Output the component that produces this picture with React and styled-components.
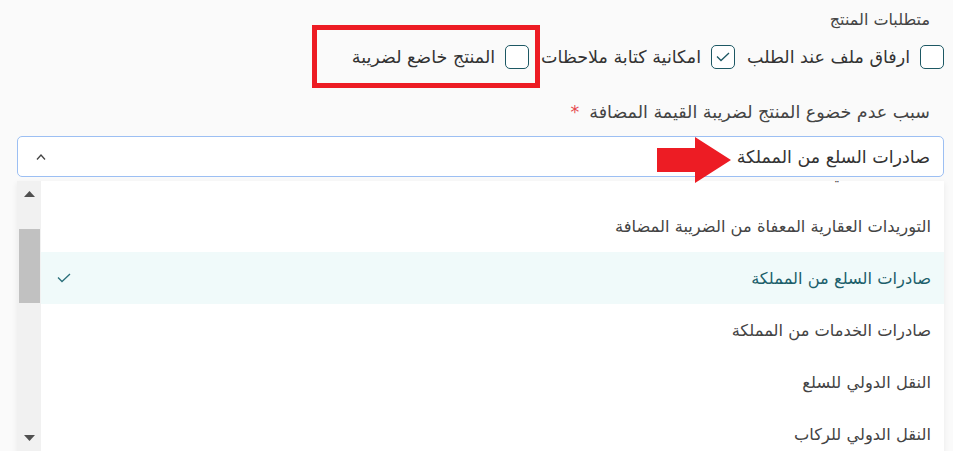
import React from "react";
import styled, { createGlobalStyle } from "styled-components";

const Global = createGlobalStyle`
  html, body { margin: 0; padding: 0; overflow: hidden; background: #fafafa; }
  body { font-family: "DejaVu Sans", "Noto Sans", sans-serif; }
  * { box-sizing: border-box; }
`;

const Page = styled.div`
  direction: rtl;
  padding: 8px 9px 0 17px;
  color: #333;
  height: 451px;
  overflow: hidden;
`;

const SectionTitle = styled.div`
  padding-right: 14px;
  font-size: 16px;
  line-height: 24px;
  color: #444;
`;

const CheckRow = styled.div`
  display: flex;
  align-items: center;
  gap: 12px;
  margin-top: 13px;
  height: 24px;
`;

const CheckItem = styled.label`
  position: relative;
  display: flex;
  align-items: center;
  gap: 10px;
  font-size: 17.5px;
  color: #333;
`;

const Box = styled.span`
  width: 24px;
  height: 24px;
  border: 1.5px solid #1d5864;
  border-radius: 5px;
  display: flex;
  align-items: center;
  justify-content: center;
  background: #fff;
  flex: none;
`;

const Annotation = styled.span`
  position: absolute;
  left: -40px;
  right: -11px;
  top: -20px;
  bottom: -19px;
  border: 5px solid #ed1c24;
  pointer-events: none;
`;

const FieldLabel = styled.div`
  margin-top: 31px;
  padding-right: 14px;
  font-size: 17.5px;
  line-height: 24px;
  color: #444;
  display: flex;
  gap: 10px;
`;

const Required = styled.span`
  color: #e5484d;
`;

const SelectWrap = styled.div`
  position: relative;
  margin-top: 12px;
`;

const SelectBox = styled.div`
  height: 41px;
  border: 1px solid #9cbff3;
  border-radius: 5px;
  background: #fff;
  display: flex;
  align-items: center;
  justify-content: space-between;
  padding: 0 13px 0 18px;
  font-size: 17.5px;
  color: #333;
`;

const ArrowMark = styled.svg`
  position: absolute;
  left: 640px;
  top: 1px;
`;

const Dropdown = styled.div`
  margin-top: 4px;
  height: 280px;
  background: #fff;
  display: flex;
  box-shadow: 0 2px 6px rgba(0, 0, 0, 0.07);
`;

const Viewport = styled.div`
  flex: 1;
  overflow: hidden;
`;

const OptionList = styled.div`
  margin-top: -33px;
  display: flex;
  flex-direction: column;
`;

const Option = styled.div`
  height: 52px;
  display: flex;
  align-items: center;
  justify-content: space-between;
  padding: 0 13px 0 16px;
  font-size: 16.3px;
  background: ${(p) => (p.$active ? "#f0fafa" : "#fff")};
  color: ${(p) => (p.$active ? "#1c5f6b" : "#444")};
`;

const Scrollbar = styled.div`
  width: 24px;
  background: #f1f1f1;
  display: flex;
  flex-direction: column;
  align-items: center;
  padding: 10px 0 20px;
`;

const Thumb = styled.div`
  width: 21px;
  height: 74px;
  background: #c1c1c1;
  margin-top: 32px;
`;

const Spacer = styled.div`
  flex: 1;
`;

const Tri = ({ down }) => (
  <svg width="11" height="6" viewBox="0 0 11 6">
    <polygon points={down ? "0,0 11,0 5.5,6" : "0,6 11,6 5.5,0"} fill="#505050" />
  </svg>
);

const Check = ({ w = 14, h = 10, color = "#1d5864" }) => (
  <svg width={w} height={h} viewBox="0 0 14 10">
    <polyline points="1,4.5 5,8.5 13,1" fill="none" stroke={color} strokeWidth="1.3" />
  </svg>
);

const options = [
  "الخدمات المالية المعفاة",
  "التوريدات العقارية المعفاة من الضريبة المضافة",
  "صادرات السلع من المملكة",
  "صادرات الخدمات من المملكة",
  "النقل الدولي للسلع",
  "النقل الدولي للركاب",
];

const selected = "صادرات السلع من المملكة";

export default function App() {
  return (
    <>
      <Global />
      <Page>
        <SectionTitle>متطلبات المنتج</SectionTitle>
        <CheckRow>
          <CheckItem>
            <Box />
            ارفاق ملف عند الطلب
          </CheckItem>
          <CheckItem>
            <Box>
              <Check />
            </Box>
            امكانية كتابة ملاحظات
          </CheckItem>
          <CheckItem>
            <Box />
            المنتج خاضع لضريبة
            <Annotation />
          </CheckItem>
        </CheckRow>
        <FieldLabel>
          سبب عدم خضوع المنتج لضريبة القيمة المضافة
          <Required>*</Required>
        </FieldLabel>
        <SelectWrap>
          <SelectBox>
            <span>{selected}</span>
            <svg width="10" height="6" viewBox="0 0 10 6">
              <polyline points="1,5.5 5,1 9,5.5" fill="none" stroke="#444" strokeWidth="1.3" />
            </svg>
          </SelectBox>
          <ArrowMark width="74" height="46" viewBox="0 0 74 46">
            <polygon points="0,11 38,11 38,0 74,23 38,46 38,35 0,35" fill="#ed1c24" />
          </ArrowMark>
        </SelectWrap>
        <Dropdown>
          <Viewport>
            <OptionList>
              {options.map((o) => (
                <Option key={o} $active={o === selected}>
                  <span>{o}</span>
                  {o === selected && <Check color="#2a6f7a" />}
                </Option>
              ))}
            </OptionList>
          </Viewport>
          <Scrollbar>
            <Tri />
            <Thumb />
            <Spacer />
            <Tri down />
          </Scrollbar>
        </Dropdown>
      </Page>
    </>
  );
}
